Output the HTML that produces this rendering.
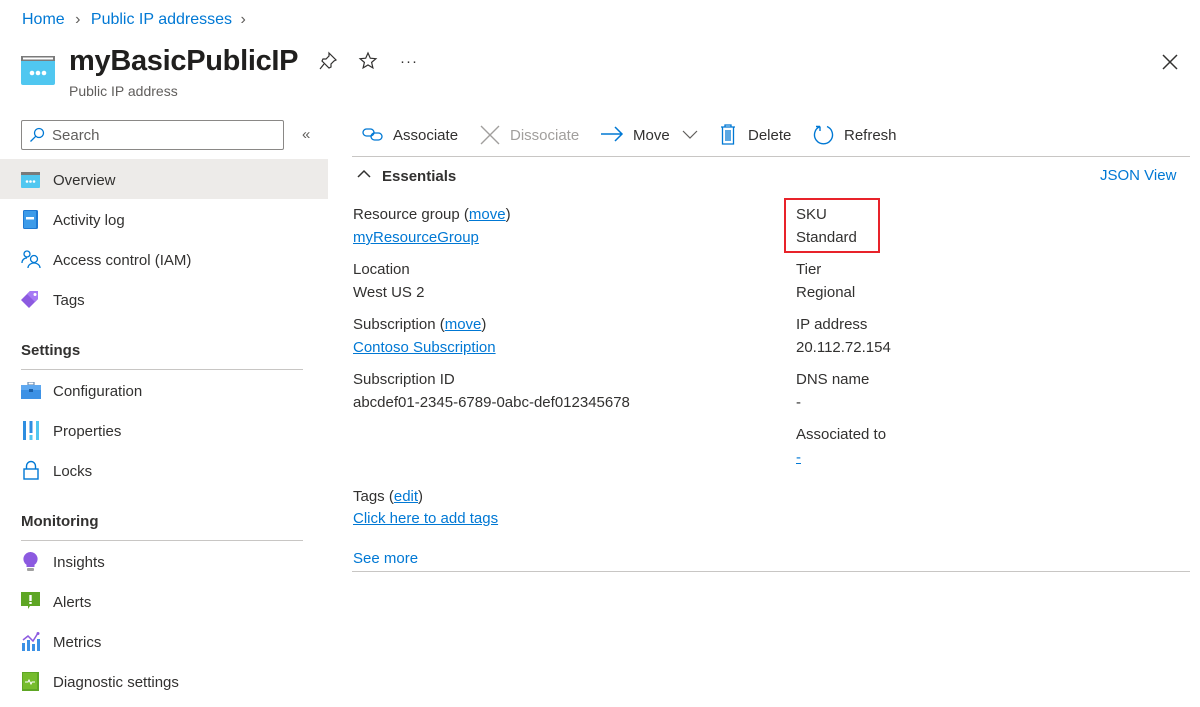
<!DOCTYPE html>
<html><head><meta charset="utf-8"><style>
*{margin:0;padding:0;box-sizing:border-box}
body{width:1200px;height:707px;background:#fff;font-family:"Liberation Sans",sans-serif;font-size:15px;color:#323130;position:relative;overflow:hidden}
.a{position:absolute;white-space:nowrap;line-height:20px;margin-top:2px}
.l{color:#0078d4}
.u{text-decoration:underline}
.g{color:#605e5c}
svg{position:absolute}
</style></head><body>
<div class="a l" style="left:22px;top:8px;font-size:16px">Home <span style="color:#605e5c;margin:0 6px">&#8250;</span> Public IP addresses <span style="color:#605e5c;margin-left:4px">&#8250;</span></div>

<svg style="left:21px;top:56px" width="35" height="30" viewBox="0 0 35 30"><rect x="0" y="0" width="34" height="29" rx="2" fill="#50c7f0"/><rect x="0" y="0" width="34" height="5" fill="#7a7a7a"/><rect x="2" y="1.5" width="30" height="2" fill="#fff"/><circle cx="11" cy="17" r="2.3" fill="#fff"/><circle cx="17" cy="17" r="2.3" fill="#fff"/><circle cx="23" cy="17" r="2.3" fill="#fff"/></svg>
<div class="a" style="left:69px;top:41px;font-size:29px;line-height:36px;font-weight:600;color:#201f1e;letter-spacing:-0.3px">myBasicPublicIP</div>
<div class="a g" style="left:69px;top:79px;font-size:14px">Public IP address</div>
<svg style="left:318px;top:51px" width="20" height="20" viewBox="0 0 20 20" fill="none" stroke="#323130" stroke-width="1.2"><path d="M11 2l7 7-2 1-3 3 0 3-2 1-7-7 1-2 3 0 3-3z"/><path d="M6 13l-4 5"/></svg>
<svg style="left:358px;top:51px" width="20" height="20" viewBox="0 0 20 20" fill="none" stroke="#323130" stroke-width="1.2"><path d="M10 2l2.3 5.2 5.6.5-4.3 3.7 1.3 5.5L10 14l-4.9 2.9 1.3-5.5L2.1 7.7l5.6-.5z"/></svg>
<div class="a" style="left:400px;top:50px;font-size:15px;letter-spacing:1px">···</div>
<svg style="left:1161px;top:53px" width="18" height="18" viewBox="0 0 18 18" stroke="#323130" stroke-width="1.5"><path d="M2 2l14 14M16 2L2 16"/></svg>

<div style="position:absolute;left:21px;top:120px;width:263px;height:30px;border:1px solid #8a8886;border-radius:2px"></div>
<svg style="left:29px;top:127px" width="16" height="16" viewBox="0 0 16 16" fill="none" stroke="#0078d4" stroke-width="1.3"><circle cx="10" cy="6" r="4.5"/><path d="M6.7 9.3L1.5 14.5"/></svg>
<div class="a g" style="left:52px;top:124px">Search</div>
<div class="a g" style="left:302px;top:123px;font-size:15px">&laquo;</div>

<div style="position:absolute;left:0;top:159px;width:328px;height:40px;background:#edebe9"></div>
<svg style="left:21px;top:172px" width="19" height="16" viewBox="0 0 19 16"><rect width="19" height="16" rx="1" fill="#50c7f0"/><rect width="19" height="3" fill="#7a7a7a"/><circle cx="6" cy="9.5" r="1.3" fill="#fff"/><circle cx="9.5" cy="9.5" r="1.3" fill="#fff"/><circle cx="13" cy="9.5" r="1.3" fill="#fff"/></svg>
<div class="a" style="left:53px;top:169px">Overview</div>
<svg style="left:23px;top:210px" width="15" height="19" viewBox="0 0 15 19"><rect width="15" height="19" rx="1.5" fill="#1f78d1"/><rect x="1" y="1" width="12" height="17" fill="#3d9be9"/><rect x="3" y="7" width="8" height="2.5" fill="#fff"/></svg>
<div class="a" style="left:53px;top:209px">Activity log</div>
<svg style="left:21px;top:250px" width="20" height="19" viewBox="0 0 20 19" fill="none" stroke="#0078d4" stroke-width="1.3"><circle cx="6" cy="4" r="3"/><circle cx="13" cy="9" r="3.5"/><path d="M1 13c0-3 2-5 5-5M7 18c0-3 3-5 6-5s6 2 6 5"/></svg>
<div class="a" style="left:53px;top:249px">Access control (IAM)</div>
<svg style="left:21px;top:290px" width="19" height="19" viewBox="0 0 19 19"><path d="M9 1h8v8l-9 9-8-8z" fill="#8c5ae0"/><path d="M9 1h8v8l-3 3-8-8z" fill="#a67af4"/><circle cx="14" cy="4.5" r="1.5" fill="#fff"/></svg>
<div class="a" style="left:53px;top:289px">Tags</div>

<div class="a" style="left:21px;top:339px;font-weight:600;color:#323130">Settings</div>
<div style="position:absolute;left:21px;top:369px;width:282px;height:1px;background:#c8c6c4"></div>
<svg style="left:21px;top:382px" width="20" height="17" viewBox="0 0 20 17"><rect x="7" y="0" width="6" height="3" fill="none" stroke="#6d8fb5" stroke-width="1.2"/><rect y="3" width="20" height="14" fill="#3c91e5"/><rect y="3" width="20" height="5" fill="#5ea8f0"/><rect x="8" y="7" width="4" height="3" fill="#1a5fa8"/></svg>
<div class="a" style="left:53px;top:380px">Configuration</div>
<svg style="left:22px;top:421px" width="18" height="19" viewBox="0 0 18 19"><rect x="1" y="0" width="3" height="19" fill="#2f8ee0"/><rect x="7.5" y="0" width="3" height="12" fill="#2f8ee0"/><rect x="7.5" y="14" width="3" height="5" fill="#50c7f0"/><rect x="14" y="0" width="3" height="19" fill="#50c7f0"/></svg>
<div class="a" style="left:53px;top:420px">Properties</div>
<svg style="left:23px;top:460px" width="16" height="20" viewBox="0 0 16 20" fill="none" stroke="#0078d4" stroke-width="1.4"><path d="M3.5 9V6a4.5 4.5 0 019 0v3"/><rect x="1" y="9" width="14" height="10"/></svg>
<div class="a" style="left:53px;top:460px">Locks</div>

<div class="a" style="left:21px;top:510px;font-weight:600">Monitoring</div>
<div style="position:absolute;left:21px;top:540px;width:282px;height:1px;background:#c8c6c4"></div>
<svg style="left:23px;top:552px" width="15" height="20" viewBox="0 0 15 20"><path d="M7.5 0a7 7 0 00-4 12.8V15h8v-2.2A7 7 0 007.5 0z" fill="#8c5ae0"/><rect x="4" y="16" width="7" height="3" rx="1" fill="#a0a0a0"/></svg>
<div class="a" style="left:53px;top:551px">Insights</div>
<svg style="left:21px;top:592px" width="19" height="18" viewBox="0 0 19 18"><path d="M0 0h19v14H9l-2 3v-3H0z" fill="#5ea624"/><rect x="8.3" y="3" width="2.4" height="6" fill="#fff"/><rect x="8.3" y="10" width="2.4" height="2" fill="#fff"/></svg>
<div class="a" style="left:53px;top:591px">Alerts</div>
<svg style="left:21px;top:632px" width="19" height="19" viewBox="0 0 19 19"><rect x="1" y="11" width="3" height="8" fill="#3c91e5"/><rect x="6" y="8" width="3" height="11" fill="#3c91e5"/><rect x="11" y="12" width="3" height="7" fill="#3c91e5"/><rect x="16" y="7" width="3" height="12" fill="#3c91e5"/><path d="M2 8l5-4 5 5 5-8" stroke="#8c5ae0" stroke-width="1.5" fill="none"/><circle cx="17" cy="1.5" r="1.5" fill="#8c5ae0"/></svg>
<div class="a" style="left:53px;top:631px">Metrics</div>
<svg style="left:22px;top:672px" width="17" height="19" viewBox="0 0 17 19"><rect width="17" height="19" fill="#5ea624"/><rect x="1" y="1" width="14" height="16" fill="#76bc2d"/><path d="M3 10h3l1-2 2 4 1-2h3" stroke="#fff" stroke-width="1" fill="none"/></svg>
<div class="a" style="left:53px;top:671px">Diagnostic settings</div>

<svg style="left:362px;top:126px" width="22" height="18" viewBox="0 0 22 18" fill="none" stroke="#0078d4" stroke-width="1.3"><rect x="1" y="3" width="11" height="7" rx="3.5"/><rect x="9" y="7" width="11" height="7" rx="3.5"/></svg>
<div class="a" style="left:393px;top:124px">Associate</div>
<svg style="left:479px;top:124px" width="22" height="22" viewBox="0 0 22 22" stroke="#a19f9d" stroke-width="1.4"><path d="M2 2l18 18M20 2L2 20"/></svg>
<div class="a" style="left:510px;top:124px;color:#a19f9d">Dissociate</div>
<svg style="left:600px;top:126px" width="24" height="16" viewBox="0 0 24 16" fill="none" stroke="#0078d4" stroke-width="1.5"><path d="M1 8h21M15 1l7 7-7 7"/></svg>
<div class="a" style="left:633px;top:124px">Move</div>
<svg style="left:682px;top:130px" width="16" height="10" viewBox="0 0 16 10" fill="none" stroke="#605e5c" stroke-width="1.2"><path d="M1 1l7 7 7-7"/></svg>
<svg style="left:720px;top:124px" width="16" height="21" viewBox="0 0 16 21" fill="none" stroke="#0078d4" stroke-width="1.3"><path d="M1 3h14M5 3V1h6v2M2.5 3v17h11V3M6 6v11M8 6v11M10 6v11"/></svg>
<div class="a" style="left:748px;top:124px">Delete</div>
<svg style="left:813px;top:124px" width="21" height="21" viewBox="0 0 21 21" fill="none" stroke="#0078d4" stroke-width="1.4"><path d="M14 2.5A9 9 0 1 1 7 2.5M7 2.5V7M7 2.5H3"/></svg>
<div class="a" style="left:844px;top:124px">Refresh</div>
<div style="position:absolute;left:352px;top:156px;width:838px;height:1px;background:#c8c6c4"></div>

<svg style="left:357px;top:169px" width="14" height="10" viewBox="0 0 14 10" fill="none" stroke="#323130" stroke-width="1.5"><path d="M1 8l6-6 6 6"/></svg>
<div class="a" style="left:382px;top:165px;font-weight:600">Essentials</div>
<div class="a l" style="left:1100px;top:164px">JSON View</div>

<div class="a" style="left:353px;top:203px">Resource group (<span class="l u">move</span>)</div>
<div class="a l u" style="left:353px;top:226px">myResourceGroup</div>
<div class="a" style="left:353px;top:258px">Location</div>
<div class="a" style="left:353px;top:281px">West US 2</div>
<div class="a" style="left:353px;top:313px">Subscription (<span class="l u">move</span>)</div>
<div class="a l u" style="left:353px;top:336px">Contoso Subscription</div>
<div class="a" style="left:353px;top:368px">Subscription ID</div>
<div class="a" style="left:353px;top:391px">abcdef01-2345-6789-0abc-def012345678</div>

<div style="position:absolute;left:784px;top:198px;width:96px;height:55px;border:2px solid #e8232a"></div>
<div class="a" style="left:796px;top:203px">SKU</div>
<div class="a" style="left:796px;top:226px">Standard</div>
<div class="a" style="left:796px;top:258px">Tier</div>
<div class="a" style="left:796px;top:281px">Regional</div>
<div class="a" style="left:796px;top:313px">IP address</div>
<div class="a" style="left:796px;top:336px">20.112.72.154</div>
<div class="a" style="left:796px;top:368px">DNS name</div>
<div class="a" style="left:796px;top:391px">-</div>
<div class="a" style="left:796px;top:423px">Associated to</div>
<div class="a l u" style="left:796px;top:446px">-</div>

<div class="a" style="left:353px;top:485px">Tags (<span class="l u">edit</span>)</div>
<div class="a l u" style="left:353px;top:507px">Click here to add tags</div>
<div class="a l" style="left:353px;top:547px">See more</div>
<div style="position:absolute;left:352px;top:571px;width:838px;height:1px;background:#c8c6c4"></div>
</body></html>
